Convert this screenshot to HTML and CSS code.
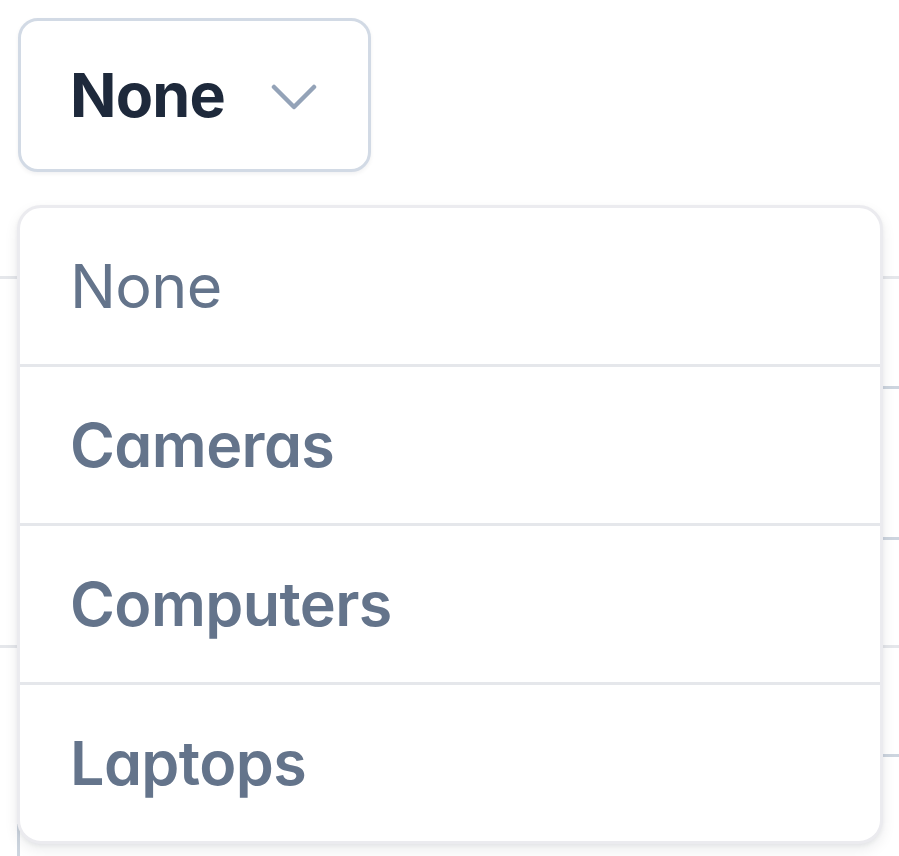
FILE: index.html
```html
<!DOCTYPE html>
<html lang="en">
<head>
<meta charset="utf-8">
<title>Select</title>
<link rel="stylesheet" href="styles.css">
</head>
<body>
<div class="page">
  <div class="select">
    <button class="trigger" type="button">
      <span class="trigger-label">None</span>
      <svg class="chevron" width="46" height="27" viewBox="0 0 46 27" aria-hidden="true">
        <polyline points="3,3 23,23 43,3" fill="none" stroke="#94a3b8" stroke-width="4.5" stroke-linecap="round" stroke-linejoin="round"/>
      </svg>
    </button>
    <ul class="menu">
      <li class="option option-none">None</li>
      <li class="option">Cameras</li>
      <li class="option">Computers</li>
      <li class="option">Laptops</li>
    </ul>
  </div>
  <div class="backdrop">
    <div class="bg-row bg-r1"></div>
    <div class="bg-row bg-r2"></div>
    <div class="bg-row bg-r3"></div>
    <div class="bg-row bg-r4"></div>
    <div class="bg-row bg-r5"></div>
    <div class="bg-row bg-r6"></div>
  </div>
</div>
</body>
</html>
```

FILE: styles.css
```css
* { box-sizing: border-box; }

html, body {
  margin: 0;
  padding: 0;
  background: #ffffff;
}

body {
  font-family: Inter, "Noto Sans", "Liberation Sans", sans-serif;
  font-feature-settings: "cv11" 1;
  width: 899px;
  height: 856px;
  overflow: hidden;
}

.page {
  position: relative;
  width: 899px;
  height: 856px;
}

.select {
  position: relative;
  z-index: 2;
  padding: 18px 0 0 18px;
}

.trigger {
  display: flex;
  align-items: center;
  width: 353px;
  height: 154px;
  padding: 0 0 0 49px;
  margin: 0;
  border: 3px solid #d2dae5;
  border-radius: 20px;
  background: #ffffff;
  box-shadow: 0 2px 4px rgba(15, 23, 42, 0.06);
  font-family: inherit;
  font-feature-settings: "cv11" 1;
  cursor: pointer;
}

.trigger-label {
  font-size: 61px;
  font-weight: 700;
  color: #1e293b;
  letter-spacing: -0.8px;
  line-height: 1;
}

.chevron {
  margin-left: 46px;
  margin-top: 5px;
  display: block;
}

.menu {
  position: absolute;
  top: 205px;
  left: 17px;
  width: 866px;
  margin: 0;
  padding: 0;
  list-style: none;
  background: #ffffff;
  border: 3px solid #ebebef;
  border-radius: 24px;
  box-shadow: 0 6px 14px rgba(15, 23, 42, 0.08), 0 2px 4px rgba(15, 23, 42, 0.05);
  overflow: hidden;
}

.option {
  display: flex;
  align-items: center;
  height: 156px;
  padding-left: 50px;
  font-size: 61px;
  font-weight: 600;
  color: #64748b;
  line-height: 1;
  letter-spacing: -0.6px;
}

.option + .option {
  height: 159px;
  border-top: 3px solid #e5e7eb;
}

.option-none {
  font-weight: 400;
}

.backdrop {
  position: absolute;
  top: 0;
  left: 0;
  width: 899px;
  height: 856px;
  z-index: 1;
  display: flex;
  flex-direction: column;
  padding-top: 276px;
}

.bg-row {
  border-top: 3px solid #e5e7eb;
}

.bg-r1 { height: 110px; }
.bg-r2 { height: 151px; border-top-color: #cdd5df; margin-left: 20px; }
.bg-r3 { height: 108px; border-top-color: #cdd5df; margin-left: 20px; }
.bg-r4 { height: 109px; }
.bg-r5 { height: 70px; border-top-color: #cdd5df; margin-left: 20px; }
.bg-r6 { flex: 1; border-top: 0; border-left: 3px solid #cdd5df; margin-left: 17px; }
```
